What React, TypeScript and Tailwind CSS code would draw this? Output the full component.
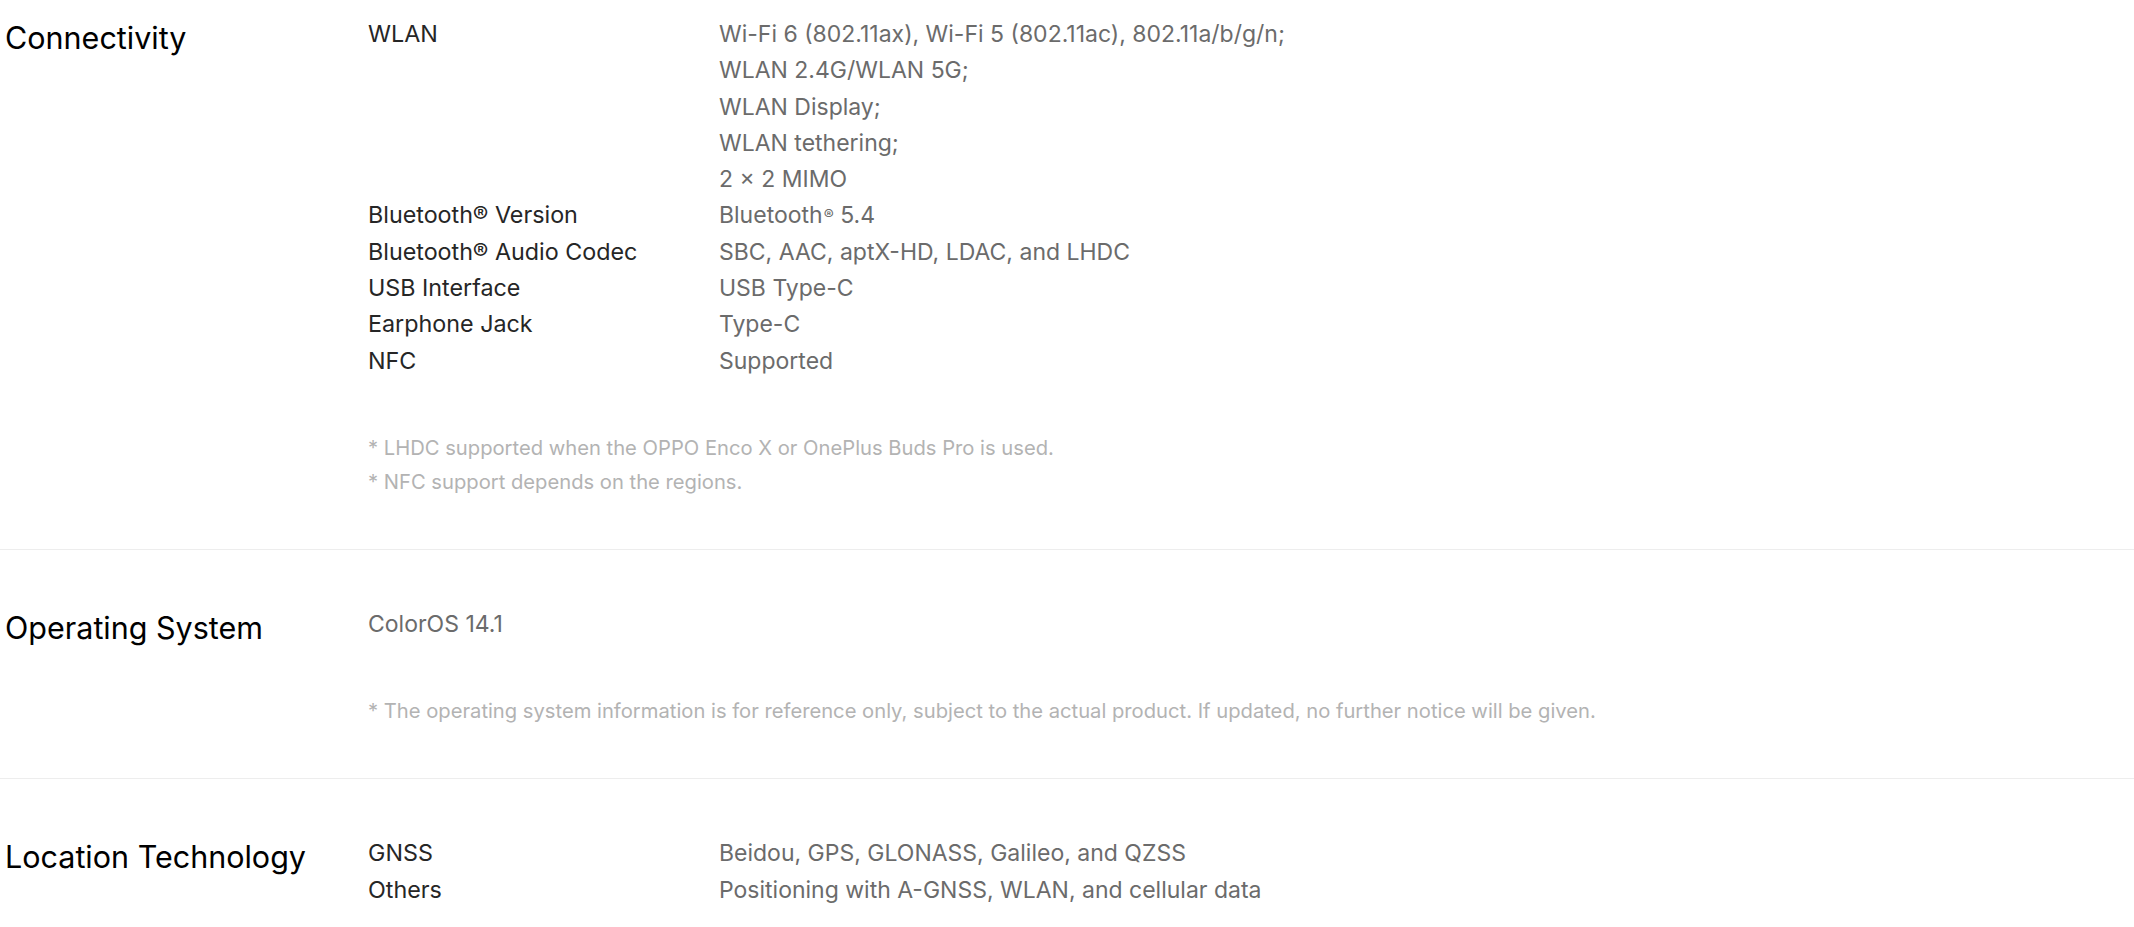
import React from "react";

type Row = { label: string; values: React.ReactNode[] };

interface SpecSectionProps {
  title: string;
  rows?: Row[];
  text?: string;
  notes?: string[];
  first?: boolean;
}

const connectivity: Row[] = [
  {
    label: "WLAN",
    values: [
      "Wi-Fi 6 (802.11ax), Wi-Fi 5 (802.11ac), 802.11a/b/g/n;",
      "WLAN 2.4G/WLAN 5G;",
      "WLAN Display;",
      "WLAN tethering;",
      "2 × 2 MIMO",
    ],
  },
  {
    label: "Bluetooth® Version",
    values: [
      <>
        Bluetooth<sup className="text-[15px] relative -top-[3px] ml-[1px]">®</sup> 5.4
      </>,
    ],
  },
  { label: "Bluetooth® Audio Codec", values: ["SBC, AAC, aptX-HD, LDAC, and LHDC"] },
  { label: "USB Interface", values: ["USB Type-C"] },
  { label: "Earphone Jack", values: ["Type-C"] },
  { label: "NFC", values: ["Supported"] },
];

const location: Row[] = [
  { label: "GNSS", values: ["Beidou, GPS, GLONASS, Galileo, and QZSS"] },
  { label: "Others", values: ["Positioning with A-GNSS, WLAN, and cellular data"] },
];

function SpecSection({ title, rows, text, notes, first }: SpecSectionProps) {
  return (
    <section
      className={`flex pl-[5px] ${first ? "pt-4" : "pt-[56px] border-t border-[#ededed]"} pb-[50px]`}
    >
      <h2 className="w-[363px] shrink-0 text-[30.5px] leading-[44px] text-black font-normal">
        {title}
      </h2>
      <div className="flex-1">
        {rows && (
          <div className="flex flex-col">
            {rows.map((row) => (
              <div key={row.label} className="flex text-[23px] leading-[36.3px]">
                <div className="w-[351px] shrink-0 text-[23.3px] text-[#262626]">{row.label}</div>
                <div className="text-[#6b6b6b]">
                  {row.values.map((v, i) => (
                    <div key={i}>{v}</div>
                  ))}
                </div>
              </div>
            ))}
          </div>
        )}
        {text && <div className="text-[23px] leading-[36.3px] text-[#6b6b6b]">{text}</div>}
        {notes && (
          <div className="mt-[52px] text-[20.2px] leading-[34px] text-[#b3b3b3]">
            {notes.map((n) => (
              <p key={n}>{n}</p>
            ))}
          </div>
        )}
      </div>
    </section>
  );
}

export default function App() {
  return (
    <div className="min-h-screen bg-white font-['Inter',_'Liberation_Sans',_sans-serif] antialiased">
      <SpecSection
        first
        title="Connectivity"
        rows={connectivity}
        notes={[
          "* LHDC supported when the OPPO Enco X or OnePlus Buds Pro is used.",
          "* NFC support depends on the regions.",
        ]}
      />
      <SpecSection
        title="Operating System"
        text="ColorOS 14.1"
        notes={[
          "* The operating system information is for reference only, subject to the actual product. If updated, no further notice will be given.",
        ]}
      />
      <SpecSection title="Location Technology" rows={location} />
    </div>
  );
}
